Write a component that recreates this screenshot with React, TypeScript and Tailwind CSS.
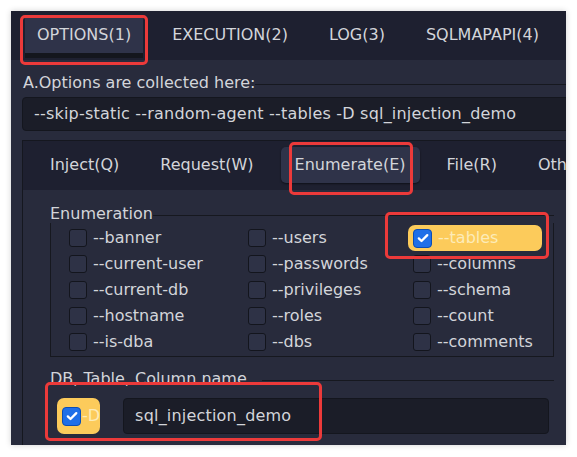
import React from 'react';

const mainTabs = ['OPTIONS(1)', 'EXECUTION(2)', 'LOG(3)', 'SQLMAPAPI(4)'];
const subTabs = ['Inject(Q)', 'Request(W)', 'Enumerate(E)', 'File(R)', 'Other(T)'];

const enumRows = [
    ['--banner', '--users', '--tables'],
    ['--current-user', '--passwords', '--columns'],
    ['--current-db', '--privileges', '--schema'],
    ['--hostname', '--roles', '--count'],
    ['--is-dba', '--dbs', '--comments'],
];

const CheckBox: React.FC<{ checked?: boolean }> = ({ checked }) => {
    if (checked) {
        return (
            <span className="flex h-[19px] w-[19px] shrink-0 items-center justify-center rounded-[4px] border border-[#0c4db5] bg-[#1f6fe8]">
                <svg viewBox="0 0 16 16" className="h-[14px] w-[14px]">
                    <path
                        d="M3.2 8.4l3.1 3.1 6.6-6.8"
                        fill="none"
                        stroke="#fff"
                        strokeWidth="2.6"
                        strokeLinecap="round"
                        strokeLinejoin="round"
                    />
                </svg>
            </span>
        );
    }
    return (
        <span className="h-[18px] w-[18px] shrink-0 rounded-[3px] border border-[#13151d] bg-[#2e3246]" />
    );
};

const GroupTitle: React.FC<{ title: string }> = ({ title }) => (
    <div className="flex h-[19px] items-center">
        <span className="leading-[19px]">{title}</span>
        <span className="mt-[4px] h-px flex-1 bg-[#16181f]" />
    </div>
);

const Mark: React.FC<{ className: string }> = ({ className }) => (
    <div
        className={`pointer-events-none absolute rounded-[5px] border-[3px] border-[#ec3a3a] ${className}`}
    />
);

export default function App() {
    return (
        <div className="relative h-[457px] w-[577px] bg-white pl-[11px] pt-[11px] font-['DejaVu_Sans',sans-serif] text-[16px] text-[#d3d5da]">
            <div className="flex h-[434px] w-[555px] flex-col overflow-hidden bg-[#282b3c] shadow-[0_0_6px_rgba(0,0,0,0.18)]">
                {/* main tab bar */}
                <div className="flex h-[49px] shrink-0 items-start gap-[17px] bg-[#1e2030] pl-[14px] pt-[7px]">
                    {mainTabs.map((tab, i) => (
                        <div
                            key={tab}
                            className={
                                i === 0
                                    ? 'flex h-[40px] items-center border-b-[5px] border-[#14161d] bg-[#2f3349] px-[12px] pb-[1px]'
                                    : 'flex h-[35px] items-center px-[12px] pb-[1px]'
                            }
                        >
                            {tab}
                        </div>
                    ))}
                </div>

                <div className="flex flex-1 flex-col pl-[11px] pt-[13px]">
                    <div className="pl-[1px]">
                        <GroupTitle title="A.Options are collected here:" />
                    </div>
                    <div className="mt-[5px] flex h-[34px] w-[560px] items-center rounded-[4px] border border-[#14161e] bg-[#1b1d28] pl-[11px] tracking-[0.2px]">
                        --skip-static --random-agent --tables -D sql_injection_demo
                    </div>

                    {/* nested tab widget */}
                    <div className="mt-[9px] flex w-[560px] flex-1 flex-col border-l border-t border-[#15171f]">
                        <div className="flex h-[49px] shrink-0 items-start gap-[13px] bg-[#1e2030] pl-[13px] pt-[6px]">
                            {subTabs.map((tab) => (
                                <div
                                    key={tab}
                                    className={
                                        tab === 'Enumerate(E)'
                                            ? 'flex h-[36px] items-center whitespace-nowrap rounded-[5px] bg-[#2f3349] px-[14px] shadow-[0_1px_2px_rgba(0,0,0,0.5)]'
                                            : 'flex h-[36px] items-center whitespace-nowrap px-[14px]'
                                    }
                                >
                                    {tab}
                                </div>
                            ))}
                        </div>

                        <div className="flex flex-col pl-[27px] pt-[14px]">
                            <div className="w-[504px]">
                                <GroupTitle title="Enumeration" />
                                <div className="border-x border-b border-[#16181f] pb-[1px] pl-[13px] pt-[2px]">
                                    {enumRows.map((row) => (
                                        <div
                                            key={row[0]}
                                            className="grid grid-cols-[179px_165px_134px]"
                                        >
                                            {row.map((opt) => {
                                                const on = opt === '--tables';
                                                return (
                                                    <div
                                                        key={opt}
                                                        className={
                                                            on
                                                                ? 'flex h-[26px] items-center gap-[6px] rounded-[7px] bg-[#fccb5b] px-[5px] text-[#fdebb8]'
                                                                : 'flex h-[26px] items-center gap-[6px] px-[5px]'
                                                        }
                                                    >
                                                        <CheckBox checked={on} />
                                                        <span>{opt}</span>
                                                    </div>
                                                );
                                            })}
                                        </div>
                                    ))}
                                </div>
                            </div>

                            <div className="mt-[12px] w-[504px]">
                                <GroupTitle title="DB, Table, Column name..." />
                                <div className="mt-[10px] flex items-center gap-[23px] pl-[7px]">
                                    <div className="flex h-[36px] shrink-0 items-center gap-[1px] rounded-[7px] bg-[#fccb5b] pl-[5px] text-[#fdebb8]">
                                        <CheckBox checked />
                                        <span className="whitespace-nowrap">-D</span>
                                    </div>
                                    <div className="mr-[5px] flex h-[36px] flex-1 items-center rounded-[4px] border border-[#14161e] bg-[#1b1d28] pl-[11px] tracking-[0.2px]">
                                        sql_injection_demo
                                    </div>
                                </div>
                            </div>
                        </div>
                    </div>
                </div>
            </div>

            {/* highlight frames */}
            <Mark className="left-[20px] top-[15px] h-[50px] w-[128px]" />
            <Mark className="left-[289px] top-[142px] h-[53px] w-[124px]" />
            <Mark className="left-[385px] top-[212px] h-[47px] w-[164px]" />
            <Mark className="left-[45px] top-[382px] h-[59px] w-[277px]" />
        </div>
    );
}
